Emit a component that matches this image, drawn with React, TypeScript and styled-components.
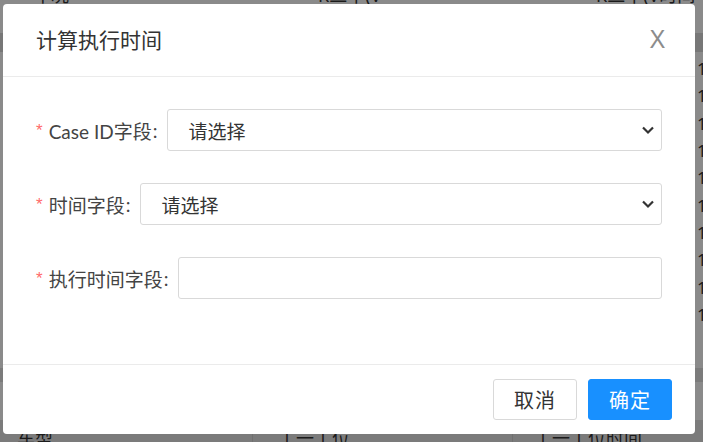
import React from "react";
import styled, { createGlobalStyle } from "styled-components";

const GlobalStyle = createGlobalStyle`
  html, body { margin: 0; padding: 0; }
  body {
    font-family: "Noto Sans", "Noto Sans CJK SC", sans-serif;
    width: 703px;
    height: 442px;
    overflow: hidden;
  }
  * { box-sizing: border-box; }
`;

const Page = styled.div`
  position: relative;
  width: 703px;
  height: 442px;
  overflow: hidden;
  background: #ffffff;
  display: flex;
  flex-direction: column;
  color: #333;
  font-size: 18px;
`;

const TopRow = styled.div`
  display: grid;
  grid-template-columns: 280px 280px 1fr;
  height: 26px;
  margin-top: -20px;
  align-items: end;
  line-height: 22px;
  flex-shrink: 0;
`;

const TopCell = styled.div<{ $pad: number }>`
  padding-left: ${(p) => p.$pad}px;
  white-space: nowrap;
`;

const Band = styled.div<{ $h: number; $shade?: string }>`
  height: ${(p) => p.$h}px;
  background: ${(p) => p.$shade || "#ffffff"};
  flex-shrink: 0;
`;

const DataRow = styled.div`
  display: grid;
  grid-template-columns: 252px 260px 184px 1fr;
  height: 27.3px;
  align-items: center;
  flex-shrink: 0;
  font-size: 17px;
`;

const DataCell = styled.div`
  white-space: nowrap;
  padding-left: 1px;
`;

const BottomRow = styled.div`
  display: grid;
  grid-template-columns: 252px 260px 1fr;
  height: 40px;
  background: #e4e4e4;
  flex-shrink: 0;
  padding-top: 4px;
`;

const BottomCell = styled.div<{ $pad: number }>`
  padding-left: ${(p) => p.$pad}px;
  border-left: 1px solid #cfcfcf;
  white-space: nowrap;
  &:first-child { border-left: none; }
`;

const Mask = styled.div`
  position: absolute;
  inset: 0;
  background: rgba(0, 0, 0, 0.46);
`;

const Modal = styled.div`
  position: absolute;
  left: 3px;
  top: 4px;
  width: 692px;
  height: 430px;
  background: #fff;
  border-radius: 4px;
  display: flex;
  flex-direction: column;
`;

const Header = styled.div`
  height: 73px;
  display: flex;
  align-items: center;
  justify-content: space-between;
  padding: 0 29px 2px 33px;
  border-bottom: 1px solid #ebebeb;
  flex-shrink: 0;
`;

const Title = styled.div`
  font-size: 21px;
  color: #333;
  font-family: "Noto Sans CJK SC", sans-serif;
  font-weight: 400;
`;

const Close = styled.div`
  font-family: "Liberation Sans", sans-serif;
  font-size: 25px;
  font-weight: 300;
  color: #8c8c8c;
  transform: scaleX(0.95);
`;

const Body = styled.div`
  flex: 1;
  padding: 32px 33px 0 33px;
  display: flex;
  flex-direction: column;
  gap: 32px;
`;

const Row = styled.div`
  display: flex;
  align-items: center;
  height: 42px;
`;

const Label = styled.label`
  display: flex;
  align-items: center;
  font-family: "Lato", "Noto Sans CJK SC", sans-serif;
  font-size: 19px;
  color: #444;
  margin-right: 10px;
  white-space: nowrap;
`;

const Colon = styled.span`
  margin-left: 1px;
`;

const Star = styled.span`
  color: #ff6b6b;
  font-family: "Liberation Sans", sans-serif;
  font-size: 17px;
  margin-right: 6px;
  position: relative;
  top: 1px;
`;

const Control = styled.div`
  flex: 1;
  height: 42px;
  border: 1px solid #d9d9d9;
  border-radius: 3px;
  display: flex;
  align-items: center;
  justify-content: space-between;
  padding: 0 6px 0 20px;
  font-size: 19px;
  font-family: "Noto Sans CJK SC", sans-serif;
  color: #333;
  background: #fff;
`;

const Footer = styled.div`
  height: 70px;
  border-top: 1px solid #ebebeb;
  display: flex;
  justify-content: flex-end;
  align-items: flex-start;
  gap: 11px;
  padding: 14px 23px 0 0;
  flex-shrink: 0;
`;

const Button = styled.button<{ $primary?: boolean }>`
  height: 41px;
  padding: 0 20px;
  min-width: 84px;
  border-radius: 3px;
  font-size: 20px;
  font-family: "Noto Sans CJK SC", sans-serif;
  letter-spacing: 1px;
  border: 1px solid ${(p) => (p.$primary ? "#1890ff" : "#d9d9d9")};
  background: ${(p) => (p.$primary ? "#1890ff" : "#fff")};
  color: ${(p) => (p.$primary ? "#fff" : "#333")};
  cursor: pointer;
`;

const Chevron = () => (
  <svg width="14" height="10" viewBox="0 0 14 10">
    <path d="M2 2.5 L7 7.5 L12 2.5" fill="none" stroke="#333" strokeWidth="2.2" />
  </svg>
);

const rows = Array.from({ length: 10 });

export default function App() {
  return (
    <>
      <GlobalStyle />
      <Page>
        <TopRow>
          <TopCell $pad={33}>车况</TopCell>
          <TopCell $pad={38}>K二十(V</TopCell>
          <TopCell $pad={36}>K二十(V时间</TopCell>
        </TopRow>
        <Band $h={27} />
        <Band $h={19} $shade="#dcdcdc" />
        <Band $h={3} />
        {rows.map((_, i) => (
          <DataRow key={i}>
            <DataCell />
            <DataCell />
            <DataCell />
            <DataCell>1</DataCell>
          </DataRow>
        ))}
        <Band $h={40} />
        <Band $h={14} $shade="#e4e4e4" />
        <Band $h={38} />
        <BottomRow>
          <BottomCell $pad={17}>车型</BottomCell>
          <BottomCell $pad={25}>工一工位</BottomCell>
          <BottomCell $pad={21}>工一工位时间</BottomCell>
        </BottomRow>
        <Mask />
        <Modal>
          <Header>
            <Title>计算执行时间</Title>
            <Close>X</Close>
          </Header>
          <Body>
            <Row>
              <Label>
                <Star>*</Star>Case ID字段<Colon>:</Colon>
              </Label>
              <Control>
                <span>请选择</span>
                <Chevron />
              </Control>
            </Row>
            <Row>
              <Label>
                <Star>*</Star>时间字段<Colon>:</Colon>
              </Label>
              <Control>
                <span>请选择</span>
                <Chevron />
              </Control>
            </Row>
            <Row>
              <Label>
                <Star>*</Star>执行时间字段<Colon>:</Colon>
              </Label>
              <Control />
            </Row>
          </Body>
          <Footer>
            <Button>取消</Button>
            <Button $primary>确定</Button>
          </Footer>
        </Modal>
      </Page>
    </>
  );
}
